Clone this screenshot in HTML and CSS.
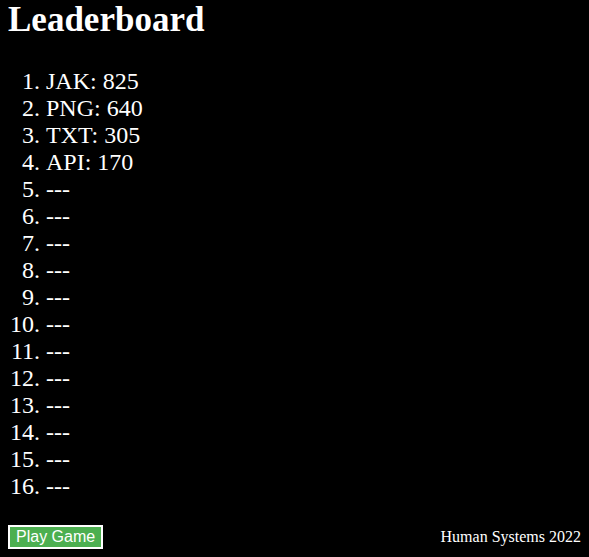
FILE: index.html
```html
<!DOCTYPE html>
<html>
<head>
<meta charset="utf-8">
<link rel="stylesheet" href="styles.css">
</head>
<body>
<h1 class="title">Leaderboard</h1>
<ol class="scores">
<li>JAK: 825</li>
<li>PNG: 640</li>
<li>TXT: 305</li>
<li>API: 170</li>
<li>---</li>
<li>---</li>
<li>---</li>
<li>---</li>
<li>---</li>
<li>---</li>
<li>---</li>
<li>---</li>
<li>---</li>
<li>---</li>
<li>---</li>
<li>---</li>
</ol>
<div class="footer">
<button class="play">Play Game</button>
<span class="credit">Human Systems 2022</span>
</div>
</body>
</html>
```
FILE: styles.css
```css
html, body {
  background: #000;
}
body {
  margin: 0 8px;
  color: #fff;
  font-family: "Liberation Serif", "Times New Roman", serif;
}
.title {
  margin: 0;
  font-size: 35px;
  font-weight: bold;
}
.scores {
  margin: 28px 0 0 0;
  padding-left: 38px;
  font-size: 24px;
}
.footer {
  display: flex;
  justify-content: space-between;
  align-items: center;
  margin-top: 25px;
}
.play {
  font-family: "Liberation Sans", Arial, sans-serif;
  font-size: 16px;
  color: #fff;
  background: #4caf50;
  border: 2px solid #fff;
  padding: 1px 6px;
  margin: 0;
}
.credit {
  font-size: 16px;
}
```
